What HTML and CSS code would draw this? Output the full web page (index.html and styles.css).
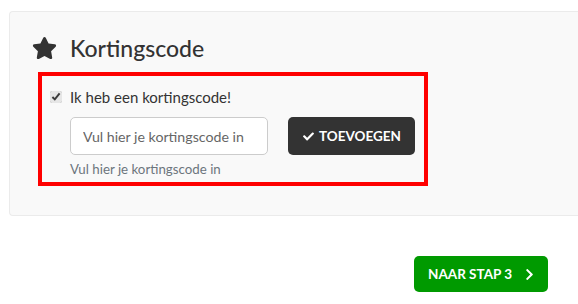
FILE: index.html
```html
<!DOCTYPE html>
<html lang="nl">
<head>
    <meta charset="UTF-8">
    <meta name="viewport" content="width=device-width, initial-scale=1.0">
    <title>Kortingscode</title>
    <link rel="stylesheet" href="styles.css">
</head>
<body>

    <div class="panel">
        <h2 class="panel-title">
            <svg class="star" viewBox="0 0 576 512" width="25" height="24"><path d="M259.3 17.8L194 150.2 47.9 171.5c-26.2 3.8-36.7 36.1-17.7 54.6l105.7 103-25 145.5c-4.5 26.3 23.2 46 46.4 33.7L288 439.6l130.7 68.7c23.2 12.2 50.9-7.4 46.4-33.7l-25-145.5 105.7-103c19-18.5 8.5-50.8-17.7-54.6L382 150.2 316.7 17.8c-11.7-23.6-45.6-23.9-57.4 0z"/></svg>
            Kortingscode
        </h2>

        <div class="coupon-box">
            <label class="coupon-check">
                <input type="checkbox" checked>
                <span>Ik heb een kortingscode!</span>
            </label>
            <div class="coupon-row">
                <input type="text" class="coupon-input" placeholder="Vul hier je kortingscode in">
                <button class="btn btn-dark">
                    <svg viewBox="0 0 512 512" width="11" height="11"><path fill="currentColor" d="M173.9 439.4l-166.4-166.4c-10-10-10-26.2 0-36.2l36.2-36.2c10-10 26.2-10 36.2 0L192 312.7 432.1 72.6c10-10 26.2-10 36.2 0l36.2 36.2c10 10 10 26.2 0 36.2L210.1 439.4c-10 10-26.2 10-36.2 0z"/></svg>
                    TOEVOEGEN
                </button>
            </div>
            <div class="coupon-help">Vul hier je kortingscode in</div>
        </div>
    </div>

    <div class="actions">
        <button class="btn btn-green">
            NAAR STAP 3
            <svg viewBox="0 0 320 512" width="9" height="13"><path fill="currentColor" d="M285.5 273L91.1 467.3c-9.4 9.4-24.6 9.4-33.9 0l-22.7-22.7c-9.4-9.4-9.4-24.5 0-33.9L188.5 256 34.5 101.3c-9.3-9.4-9.3-24.5 0-33.9l22.7-22.7c9.4-9.4 24.6-9.4 33.9 0L285.5 239c9.4 9.4 9.4 24.6 0 34z"/></svg>
        </button>
    </div>

</body>
</html>
```

FILE: styles.css
```css
body {
    margin: 0;
    background: #fff;
    font-family: Lato, "Open Sans", sans-serif;
    color: #333;
    overflow: hidden;
}

/* panel runs off the right edge in the original, so no right border */
.panel {
    margin: 11px 0 0 9px;
    height: 205px;
    box-sizing: border-box;
    background: #f9f9f9;
    border: 1px solid #ebebeb;
    border-right: none;
    border-radius: 4px 0 0 4px;
    padding: 22px 0 0 22px;
}

.panel-title {
    display: flex;
    align-items: center;
    gap: 13px;
    margin: 0;
    height: 28px;
    font-size: 23px;
    font-weight: 500;
    color: #333;
}

.star {
    fill: #333;
}

.coupon-box {
    margin: 10px 0 0 6px;
    width: 390px;
    height: 114px;
    box-sizing: border-box;
    border: 4px solid #ff0000;
    padding: 12px 0 0 8px;
}

.coupon-check {
    display: flex;
    align-items: center;
    height: 18px;
    font-size: 15px;
    color: #333;
}

.coupon-check input {
    margin: 0 8px 0 0;
    width: 12px;
    height: 12px;
    accent-color: #e6e6e6;
}

.coupon-row {
    display: flex;
    gap: 20px;
    margin: 11px 0 0 20px;
}

.coupon-input {
    width: 198px;
    height: 38px;
    box-sizing: border-box;
    border: 1px solid #ccc;
    border-radius: 5px;
    padding: 0 12px;
    font-family: inherit;
    font-size: 14.2px;
    color: #333;
    background: #fff;
}

.coupon-input::placeholder {
    color: #666;
}

.btn {
    display: flex;
    align-items: center;
    border: none;
    border-radius: 5px;
    color: #fff;
    font-family: inherit;
    font-weight: 700;
    font-size: 13.5px;
    cursor: pointer;
}

.btn-dark {
    width: 127px;
    height: 38px;
    background: #333;
    gap: 5px;
    padding: 0 0 0 15px;
}

.coupon-help {
    margin: 6px 0 0 20px;
    font-size: 13.3px;
    color: #6c757d;
}

.actions {
    display: flex;
    justify-content: flex-end;
    padding: 40px 30px 0 0;
}

.btn-green {
    width: 134px;
    height: 36px;
    background: #009a00;
    gap: 13px;
    padding: 0 0 0 14px;
}
```
